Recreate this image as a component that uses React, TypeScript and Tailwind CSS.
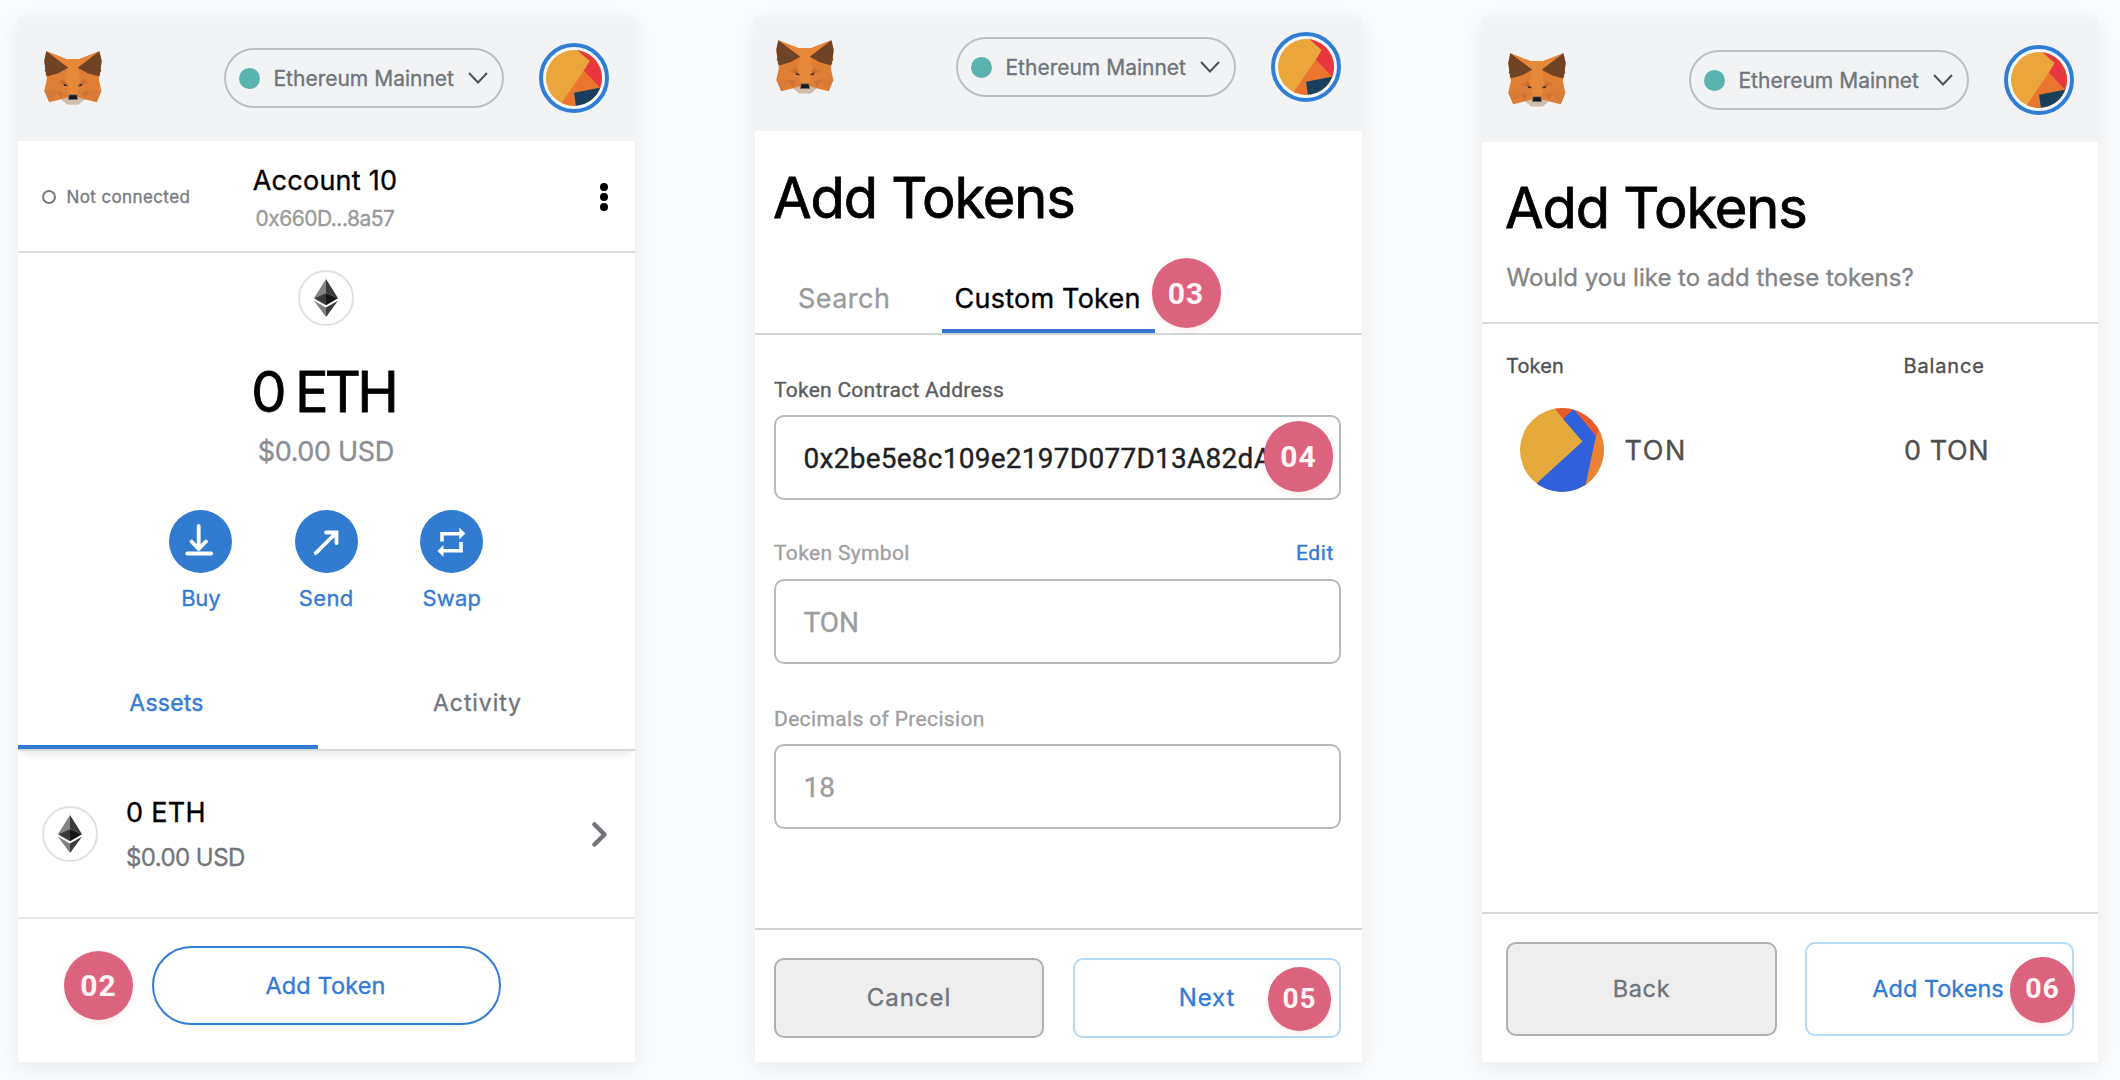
import type { ReactNode } from 'react';

function Fox() {
  return (
    <svg viewBox="41 63 175 162" preserveAspectRatio="none" className="h-[54px] w-[58px] shrink-0">
      <path d="M48 64L42 92 47 134 50 146 42 182 57 217 93 208 112 223H145L163 208 200 217 214 182 206 146 210 134 215 92 208 64 148 87H108Z" fill="#df7e35" />
      <path d="M48 64L108 87H148L208 64 143 112 148 150 128 190 108 150 114 112Z" fill="#e6873a" />
      <path d="M108 87H148L143 112 150 150 142 194H115L106 150 114 112Z" fill="#e8893a" />
      <path d="M42 182H85L57 217Z" fill="#d67a35" />
      <path d="M214 182H172L200 217Z" fill="#d67a35" />
      <path d="M78 183L100 187 92 206Z" fill="#cc7336" />
      <path d="M178 183L157 187 164 206Z" fill="#cc7336" />
      <path d="M48 64L42 92 45 118 43 122 48 128 46 133 52 139 84 130 114 113Z" fill="#704324" />
      <path d="M208 64L215 92 212 118 214 122 209 128 211 133 205 139 173 130 143 113Z" fill="#704324" />
      <path d="M81 159L99 147 108 156 115 169 100 163Z" fill="#cf7131" />
      <path d="M176 159L158 147 149 156 142 169 157 163Z" fill="#cf7131" />
      <path d="M99 160L115 169 103 168Z" fill="#1f2a35" />
      <path d="M158 160L142 169 154 168Z" fill="#1f2a35" />
      <path d="M93 208L114 202H143L163 208 147 223H111Z" fill="#cfbdad" />
      <path d="M116 193H141L144 209H113Z" fill="#7d6c60" />
      <path d="M118 196H139L141 208H116Z" fill="#17191c" />
    </svg>
  );
}

function Avatar() {
  return (
    <div className="flex size-[70px] shrink-0 items-center justify-center rounded-full border-4 border-[#2f7dd6] bg-[#f7f8fa]">
      <div className="size-[56px] overflow-hidden rounded-full">
        <svg viewBox="0 0 56 56" className="size-full">
          <path d="M0 0H56V56H0Z" fill="#eaa53b" />
          <path d="M30 -1L43.7 11 37.7 20.7 54 38 60 38V-1Z" fill="#e8373f" />
          <path d="M37.7 20.7L54 38 28 43 30 57H13Z" fill="#ea752f" />
          <path d="M28 42.7L56 37.3V57H30Z" fill="#193f5d" />
        </svg>
      </div>
    </div>
  );
}

function Header({ className }: { className: string }) {
  return (
    <header className={`flex items-start bg-[#f2f3f5] ${className}`}>
      <div className="mt-2"><Fox /></div>
      <div className="mt-[5px] mr-[35px] ml-auto flex h-[60px] w-[280px] items-center rounded-full border-2 border-[#bbbec2] pr-[14px] pl-[13px]">
        <span className="size-[21px] rounded-full bg-[#5ab3ac]" />
        <span className="ml-[13.5px] text-[21px] leading-none text-[#70757c]">Ethereum Mainnet</span>
        <svg viewBox="0 0 20 12" className="ml-auto h-[12px] w-[20px]" fill="none" stroke="#4c5156" strokeWidth="2">
          <path d="M1 1L10 10.5 19 1" />
        </svg>
      </div>
      <Avatar />
    </header>
  );
}

function Badge({ children, className }: { children: ReactNode; className: string }) {
  return (
    <span className={`absolute flex items-center justify-center rounded-full bg-[#dc637e] font-['Roboto'] font-bold tracking-[1px] text-[#fff5f6] shadow-[0_3px_6px_rgba(220,99,126,0.12)] [-webkit-text-stroke:0] ${className}`}>
      {children}
    </span>
  );
}

function EthIcon() {
  return (
    <div className="flex size-[56px] shrink-0 items-center justify-center rounded-full border-2 border-[#e0e1e2] bg-white">
      <svg viewBox="0 0 24 38" className="h-[38px] w-[24px]">
        <path d="M12 0V14L0 19.3Z" fill="#828282" />
        <path d="M12 0V14L24 19.3Z" fill="#3a3a3a" />
        <path d="M12 14L0 19.3 12 26.2Z" fill="#393939" />
        <path d="M12 14L24 19.3 12 26.2Z" fill="#161616" />
        <path d="M0 21.7L12 28.6V38Z" fill="#828282" />
        <path d="M24 21.7L12 28.6V38Z" fill="#3c3c3b" />
      </svg>
    </div>
  );
}

function Action({ label, className, children }: { label: string; className: string; children: ReactNode }) {
  return (
    <div className="flex w-[63px] flex-col items-center">
      <div className="flex size-[63px] items-center justify-center rounded-full bg-[#317cd1]">
        <svg viewBox="0 0 63 63" className="size-[63px]" fill="none" stroke="#fff" strokeWidth="3.8">{children}</svg>
      </div>
      <span className={`mt-3.5 text-[22px] leading-none text-[#347bd2] ${className}`}>{label}</span>
    </div>
  );
}

function AccountCard() {
  return (
    <section className="relative flex h-[1045px] w-[617px] shrink-0 flex-col bg-white shadow-[0_5px_18px_rgba(30,40,60,0.08)]">
      <Header className="h-[124px] pt-[26px] pr-[26px] pl-[26px]" />
      <div className="grid h-[112px] grid-cols-[1fr_auto_1fr] items-center border-b-2 border-[#d9dbdd] pr-[27px] pl-[24px]">
        <div className="flex items-center pt-0.5">
          <span className="size-[14px] rounded-full border-2 border-[#777b80]" />
          <span className="ml-[10.5px] text-[17px] leading-none tracking-[0.39px] text-[#777b81]">Not connected</span>
        </div>
        <div className="flex flex-col items-center pt-[4px]">
          <span className="text-[27px] leading-none tracking-[0.25px] text-black">Account 10</span>
          <span className="mt-[14px] text-[21px] leading-none tracking-[-0.5px] text-[#9a9a9a]">0x660D...8a57</span>
        </div>
        <div className="flex flex-col gap-0.5 justify-self-end pt-0.5">
          <span className="size-2 rounded-full bg-black" />
          <span className="size-2 rounded-full bg-black" />
          <span className="size-2 rounded-full bg-black" />
        </div>
      </div>
      <div className="flex flex-col items-center pt-[17px] pr-[0.5px]">
        <EthIcon />
        <span className="mt-[38px] mr-[6px] text-[56px] leading-none tracking-[-3.7px] text-black [-webkit-text-stroke:0.8px]">0 ETH</span>
        <span className="mt-[18px] mr-px text-[27px] leading-none tracking-[-0.35px] text-[#8b8f95]">$0.00 USD</span>
        <div className="mt-[45px] flex gap-[62.5px]">
          <Action label="Buy" className="tracking-[-0.2px]">
            <path d="M29.7 16V39M22.5 31.5L29.7 39 37 31.5" strokeLinecap="round" strokeLinejoin="round" />
            <path d="M18.3 43.5H42.2" strokeLinecap="round" />
          </Action>
          <Action label="Send" className="tracking-[0.35px]">
            <path d="M20.7 43.2L41 23M31 22.5H41.5V33" strokeLinecap="round" />
          </Action>
          <Action label="Swap" className="tracking-[0.18px]">
            <path d="M22 31.5V23.7H40M41 32V40.8H22.5" strokeWidth="3.6" />
            <path d="M39.3 17.5V29.5L45.3 23.5ZM23.5 35V46.8L17.4 40.9Z" fill="#fff" stroke="none" />
          </Action>
        </div>
      </div>
      <div className="mt-[48px] grid h-[94px] grid-cols-[300px_1fr] border-b-2 border-[#d7d8d9] text-[23px] leading-none shadow-[0_8px_8px_-5px_rgba(0,0,0,0.1)]">
        <div className="flex items-center justify-center border-b-4 border-[#307cd4] pt-[5px] pr-[3px] tracking-[0.23px] text-[#347bd2]">Assets</div>
        <div className="flex items-center justify-center pl-0.5 tracking-[0.92px] text-[#70757b]">Activity</div>
      </div>
      <div className="flex h-[168px] items-center border-b-2 border-[#e6e8ea] pr-[27px] pl-6">
        <EthIcon />
        <div className="ml-[28px] flex flex-col gap-5">
          <span className="text-[27px] leading-none tracking-[0.3px] text-black">0 ETH</span>
          <span className="text-[24px] leading-none tracking-[-0.57px] text-[#72767c]">$0.00 USD</span>
        </div>
        <svg viewBox="0 0 16 25" className="ml-auto h-[25px] w-[16px]" fill="none" stroke="#707479" strokeWidth="4.5">
          <path d="M2.5 2.5L12.5 12.5 2.5 22.5" strokeLinecap="round" strokeLinejoin="round" />
        </svg>
      </div>
      <button className="mx-auto mt-[27px] h-[79px] w-[349px] rounded-full border-2 border-[#337dd5] pr-[2px] text-[23.5px] leading-none tracking-[0.1px] text-[#2f7bd6]">Add Token</button>
      <Badge className="top-[934px] left-[46px] size-[69px] text-[30px]">02</Badge>
    </section>
  );
}

function Field({ label, value, edit, className, active }: { label: string; value: string; edit?: boolean; className: string; active?: boolean }) {
  return (
    <div className="font-['Roboto']">
      <div className="flex h-[21px] items-center justify-between pt-[2px] pr-[7px] text-[21px] leading-none">
        <span className={active ? 'tracking-[0.26px] text-[#5b5d60]' : 'tracking-[0.35px] text-[#9fa0a1]'}>{label}</span>
        {edit && <span className="tracking-[0.6px] text-[#2f7bd6]">Edit</span>}
      </div>
      <div className={`flex h-[85px] items-center overflow-hidden rounded-[10px] border-2 border-[#b9babb] pt-[2px] pl-[27.5px] text-[28px] leading-none ${className}`}>
        {value}
      </div>
    </div>
  );
}

function CustomTokenCard() {
  return (
    <section className="relative flex h-[1045px] w-[607px] shrink-0 flex-col bg-white shadow-[0_5px_18px_rgba(30,40,60,0.08)]">
      <Header className="h-[114px] pt-[15px] pr-[21px] pl-[21px]" />
      <h1 className="mt-[39px] ml-[18px] text-[56px] leading-none tracking-[-1.15px] text-black [-webkit-text-stroke:0.8px]">Add Tokens</h1>
      <div className="flex h-[109px] items-end border-b-2 border-[#d3d7da] pl-[43px] text-[27px] leading-none">
        <span className="w-[91px] pb-[21px] tracking-[0.45px] text-[#9a9b9c]">Search</span>
        <span className="ml-[52.5px] w-[213px] border-b-4 border-[#3578cb] pb-[17px] pl-[13px] tracking-[0.24px] whitespace-nowrap text-black">Custom Token</span>
      </div>
      <div className="pt-[44px] pr-[21px] pl-[19px]">
        <Field label="Token Contract Address" value="0x2be5e8c109e2197D077D13A82dA" active className="mt-[15px] tracking-[0.26px] text-[#202124]" />
        <div className="h-[42px]" />
        <Field label="Token Symbol" value="TON" edit className="mt-4 text-[#9c9d9e]" />
        <div className="h-[44px]" />
        <Field label="Decimals of Precision" value="18" className="mt-[15px] text-[#9c9d9e]" />
      </div>
      <footer className="mt-auto flex h-[134px] items-start justify-between border-t-2 border-[#cfd2d4] pt-[28px] pr-[21px] pl-[19px] text-[24px] leading-none">
        <button className="h-[80px] w-[270px] rounded-[10px] border-2 border-[#b0b0b0] bg-[#eee] tracking-[0.95px] text-[#70747a]">Cancel</button>
        <button className="h-[80px] w-[268px] rounded-[10px] border-2 border-[#b5d8f3] tracking-[0.9px] text-[#2f7bd6]">Next</button>
      </footer>
      <Badge className="top-[241px] left-[396.5px] h-[70px] w-[69px] text-[30px]">03</Badge>
      <Badge className="top-[403.5px] left-[509px] h-[71px] w-[69px] text-[30px]">04</Badge>
      <Badge className="top-[950px] left-[513px] h-[64px] w-[63px] text-[28px]">05</Badge>
    </section>
  );
}

function TokenIcon() {
  return (
    <div className="size-[84px] shrink-0 overflow-hidden rounded-full">
      <svg viewBox="0 0 84 84" className="size-full">
        <path d="M0 0H84V84H0Z" fill="#e6a93c" />
        <path d="M33.5 -1H84V28H76L53 3 43 11Z" fill="#e95a2b" />
        <path d="M84 12L76 28 64 80 84 84Z" fill="#ea8333" />
        <path d="M43 11L53.5 1 76 28 64 84H10L17 75 62.5 33.5Z" fill="#3061da" />
      </svg>
    </div>
  );
}

function ConfirmCard() {
  return (
    <section className="relative flex h-[1045px] w-[616px] shrink-0 flex-col bg-white shadow-[0_5px_18px_rgba(30,40,60,0.08)]">
      <Header className="h-[125px] pt-[28px] pr-[24px] pl-[26px]" />
      <h1 className="mt-[38px] ml-[23px] text-[56px] leading-none tracking-[-1.15px] text-black [-webkit-text-stroke:0.8px]">Add Tokens</h1>
      <p className="mt-[30px] ml-[24.5px] text-[24px] leading-none text-[#838485]">Would you like to add these tokens?</p>
      <div className="mt-[32px] grid grid-cols-[397.5px_1fr] border-t-2 border-[#d9dadc] pt-[32px] pl-[24px] text-[20px] leading-none text-[#4f5052]">
        <span className="tracking-[0.1px]">Token</span>
        <span className="tracking-[0.85px]">Balance</span>
      </div>
      <div className="mt-[32px] grid grid-cols-[384.5px_1fr] items-center pl-[37.5px] text-[27px] leading-none text-[#4f5052]">
        <div className="flex items-center gap-[21px]">
          <TokenIcon />
          <span className="tracking-[1.6px]">TON</span>
        </div>
        <span className="tracking-[0.6px]">0 TON</span>
      </div>
      <footer className="mt-auto flex h-[150px] items-start justify-between border-t-2 border-[#d7dadd] px-[24px] pt-[28px] text-[23.5px] leading-none">
        <button className="h-[94px] w-[271px] rounded-[10px] border-2 border-[#b0b0b0] bg-[#eee] tracking-[0.67px] text-[#70747a]">Back</button>
        <button className="h-[94px] w-[269px] rounded-[10px] border-2 border-[#b5dbf8] pr-[3px] text-[#2f7bd6]">Add Tokens</button>
      </footer>
      <Badge className="top-[939.5px] left-[528px] h-[66px] w-[65px] text-[28.5px]">06</Badge>
    </section>
  );
}

export default function App() {
  return (
    <main className="flex h-[1080px] w-[2120px] gap-[120px] overflow-hidden bg-[#fafbfc] pt-[17px] pl-[18px] font-['Inter',sans-serif] font-normal [-webkit-text-stroke:0.35px]">
      <AccountCard />
      <CustomTokenCard />
      <ConfirmCard />
    </main>
  );
}
